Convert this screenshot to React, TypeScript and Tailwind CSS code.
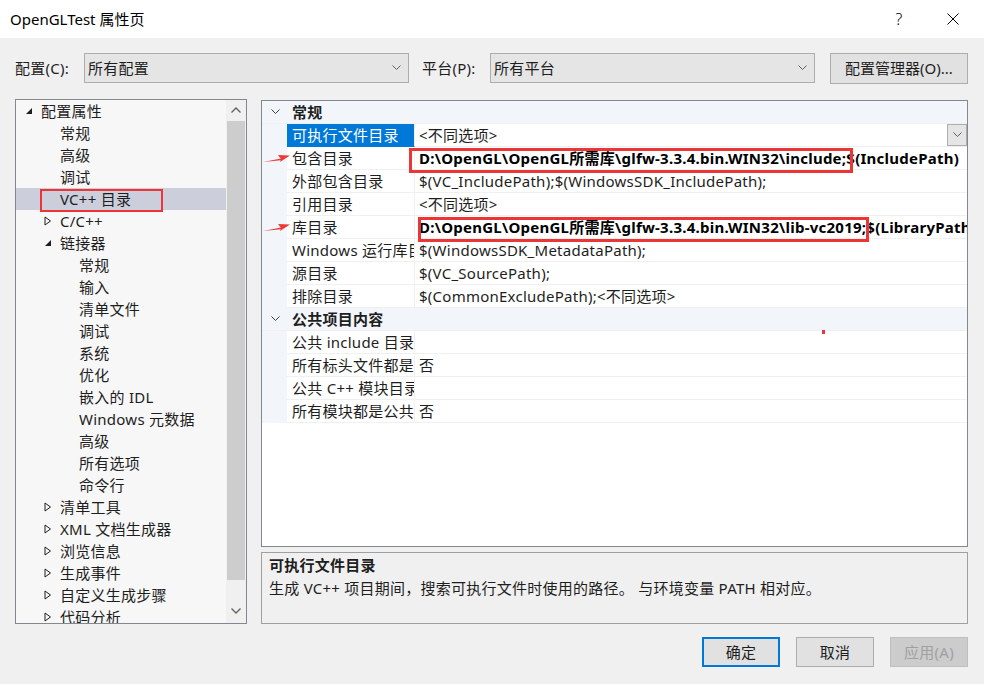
import React from "react";

type TreeItem = { t: string; lvl: number; exp?: "open" | "closed"; sel?: boolean };

const tree: TreeItem[] = [
  { t: "配置属性", lvl: 0, exp: "open" },
  { t: "常规", lvl: 1 },
  { t: "高级", lvl: 1 },
  { t: "调试", lvl: 1 },
  { t: "VC++ 目录", lvl: 1, sel: true },
  { t: "C/C++", lvl: 1, exp: "closed" },
  { t: "链接器", lvl: 1, exp: "open" },
  { t: "常规", lvl: 2 },
  { t: "输入", lvl: 2 },
  { t: "清单文件", lvl: 2 },
  { t: "调试", lvl: 2 },
  { t: "系统", lvl: 2 },
  { t: "优化", lvl: 2 },
  { t: "嵌入的 IDL", lvl: 2 },
  { t: "Windows 元数据", lvl: 2 },
  { t: "高级", lvl: 2 },
  { t: "所有选项", lvl: 2 },
  { t: "命令行", lvl: 2 },
  { t: "清单工具", lvl: 1, exp: "closed" },
  { t: "XML 文档生成器", lvl: 1, exp: "closed" },
  { t: "浏览信息", lvl: 1, exp: "closed" },
  { t: "生成事件", lvl: 1, exp: "closed" },
  { t: "自定义生成步骤", lvl: 1, exp: "closed" },
  { t: "代码分析", lvl: 1, exp: "closed" },
];

const padByLevel = ["pl-[9px]", "pl-[28px]", "pl-[47px]"];

type Row =
  | { kind: "header"; t: string }
  | { kind: "row"; label: string; value: string; bold?: boolean; sel?: boolean; dd?: boolean };

const rows: Row[] = [
  { kind: "header", t: "常规" },
  { kind: "row", label: "可执行文件目录", value: "<不同选项>", sel: true, dd: true },
  { kind: "row", label: "包含目录", value: "D:\\OpenGL\\OpenGL所需库\\glfw-3.3.4.bin.WIN32\\include;$(IncludePath)", bold: true },
  { kind: "row", label: "外部包含目录", value: "$(VC_IncludePath);$(WindowsSDK_IncludePath);" },
  { kind: "row", label: "引用目录", value: "<不同选项>" },
  { kind: "row", label: "库目录", value: "D:\\OpenGL\\OpenGL所需库\\glfw-3.3.4.bin.WIN32\\lib-vc2019;$(LibraryPath)", bold: true },
  { kind: "row", label: "Windows 运行库目录", value: "$(WindowsSDK_MetadataPath);" },
  { kind: "row", label: "源目录", value: "$(VC_SourcePath);" },
  { kind: "row", label: "排除目录", value: "$(CommonExcludePath);<不同选项>" },
  { kind: "header", t: "公共项目内容" },
  { kind: "row", label: "公共 include 目录", value: "" },
  { kind: "row", label: "所有标头文件都是公共的", value: "否" },
  { kind: "row", label: "公共 C++ 模块目录", value: "" },
  { kind: "row", label: "所有模块都是公共的", value: "否" },
];

function ChevronDown({ className = "" }: { className?: string }) {
  return (
    <svg width="9" height="6" viewBox="0 0 9 6" className={className}>
      <path d="M0.5 0.5 L4.5 4.5 L8.5 0.5" fill="none" stroke="currentColor" strokeWidth="1" />
    </svg>
  );
}

function TreeToggle({ exp }: { exp?: "open" | "closed" }) {
  if (exp === "open")
    return (
      <svg width="8" height="8" viewBox="0 0 8 8">
        <polygon points="7,1 7,7 1,7" fill="#1e1e1e" />
      </svg>
    );
  if (exp === "closed")
    return (
      <svg width="8" height="10" viewBox="0 0 8 10">
        <polygon points="1,1 6.5,5 1,9" fill="none" stroke="#1e1e1e" strokeWidth="1" />
      </svg>
    );
  return null;
}

function RedArrow() {
  return (
    <svg width="28" height="10" viewBox="0 0 28 10">
      <path d="M0 8 L18 4.6 L18 6.2 Z" fill="#ec3a3a" />
      <polygon points="27,1.5 15,1 18,5 17,8" fill="#ec3a3a" />
    </svg>
  );
}

export default function App() {
  return (
    <div className="w-[984px] h-[684px] bg-[#f0f0f0] flex flex-col font-['Noto_Sans','Noto_Sans_CJK_SC',sans-serif] text-[15px] tracking-[0.25px] text-[#1e1e1e] overflow-hidden">
      {/* Title bar */}
      <div className="h-[38px] bg-white flex items-center shrink-0">
        <div className="pl-[10px] text-[15px] leading-[20px] text-black tracking-normal">OpenGLTest 属性页</div>
        <div className="ml-auto flex items-center">
          <div className="w-[20px] text-center text-[16px] leading-[20px] text-black font-light mr-[38px]">?</div>
          <svg width="12" height="12" viewBox="0 0 12 12" className="mr-[25px]">
            <path d="M0.5 0.5 L11.5 11.5 M11.5 0.5 L0.5 11.5" stroke="#000" strokeWidth="1" />
          </svg>
        </div>
      </div>

      {/* Config row */}
      <div className="flex items-center h-[30px] mt-[15px] shrink-0">
        <div className="w-[84px] pl-[15px] leading-[20px]">配置(C):</div>
        <div className="w-[325px] h-[30px] bg-[#e5e5e5] border border-[#adadad] flex items-center pl-[3px] pr-[7px]">
          <span className="leading-[20px]">所有配置</span>
          <ChevronDown className="ml-auto text-[#606060]" />
        </div>
        <div className="w-[81px] pl-[13px] leading-[20px]">平台(P):</div>
        <div className="w-[325px] h-[30px] bg-[#e5e5e5] border border-[#adadad] flex items-center pl-[3px] pr-[7px]">
          <span className="leading-[20px]">所有平台</span>
          <ChevronDown className="ml-auto text-[#606060]" />
        </div>
        <div className="ml-[15px] w-[138px] h-[31px] bg-[#e1e1e1] border border-[#adadad] flex items-center justify-center leading-[20px] tracking-normal">
          配置管理器(O)...
        </div>
      </div>

      {/* Main */}
      <div className="flex mt-[16px] h-[525px] shrink-0">
        {/* Tree */}
        <div className="ml-[15px] w-[232px] h-[525px] border border-[#828790] bg-[#f7f7f7] flex overflow-hidden relative">
          <div className="flex-1 overflow-hidden">
            {tree.map((it, i) => (
              <div
                key={i}
                className={`h-[22px] flex items-center whitespace-nowrap ${padByLevel[it.lvl]} ${it.sel ? "bg-[#cccedb]" : ""}`}
              >
                <div className="w-[16px] flex items-center">
                  <TreeToggle exp={it.exp} />
                </div>
                <span className="leading-[20px]">{it.t}</span>
              </div>
            ))}
          </div>
          <div className="w-[20px] bg-[#f0f0f0] flex flex-col items-stretch">
            <div className="h-[20px] flex items-center justify-center text-[#606060]">
              <svg width="10" height="6" viewBox="0 0 10 6">
                <path d="M0.5 5.5 L5 1 L9.5 5.5" fill="none" stroke="currentColor" strokeWidth="1.3" />
              </svg>
            </div>
            <div className="mt-[1px] h-[459px] mx-[1px] bg-[#cdcdcd]" />
            <div className="flex-1" />
            <div className="h-[20px] flex items-center justify-center text-[#606060] mb-[2px]">
              <svg width="10" height="6" viewBox="0 0 10 6">
                <path d="M0.5 0.5 L5 5 L9.5 0.5" fill="none" stroke="currentColor" strokeWidth="1.3" />
              </svg>
            </div>
          </div>
          {/* red box on VC++ 目录 */}
          <div className="absolute left-[24px] top-[89px] w-[123px] h-[23px] border-[2.5px] border-[#ec3535]" />
        </div>

        {/* Right column */}
        <div className="ml-[14px] w-[707px] flex flex-col">
          <div className="h-[447px] mt-[1px] border border-[#828790] bg-white relative overflow-hidden">
            {rows.map((r, i) =>
              r.kind === "header" ? (
                <div key={i} className="h-[23px] bg-[#f2f5fa] flex items-center border-b border-[#f0f0f0]">
                  <div className="w-[25px] flex justify-center pl-[1px] text-[#404040]">
                    <ChevronDown />
                  </div>
                  <span className="pl-[5px] font-bold leading-[20px] whitespace-nowrap">{r.t}</span>
                </div>
              ) : (
                <div key={i} className="h-[23px] flex">
                  <div className="w-[25px] bg-[#f2f5fa] shrink-0" />
                  <div
                    className={`w-[128px] shrink-0 border-r border-[#f0f0f0] border-b overflow-hidden whitespace-nowrap flex items-center pl-[5px] ${
                      r.sel ? "bg-[#0078d7] text-white border-b-[#0078d7]" : "border-b-[#f0f0f0]"
                    }`}
                  >
                    <span className="leading-[20px]">{r.label}</span>
                  </div>
                  <div className="flex-1 border-b border-[#f0f0f0] flex items-center pl-[4px] whitespace-nowrap overflow-hidden">
                    <span className={`leading-[20px] ${r.bold ? "font-bold text-black" : ""}`}>{r.value}</span>
                    {r.dd && (
                      <div className="ml-auto w-[20px] h-[22px] bg-[#e5e5e5] border border-[#adadad] flex items-center justify-center text-[#606060] shrink-0">
                        <ChevronDown />
                      </div>
                    )}
                  </div>
                </div>
              )
            )}
            {/* annotations */}
            <div className="absolute left-[147px] top-[47px] w-[444px] h-[25px] border-[3px] border-[#ec3535]" />
            <div className="absolute left-[156px] top-[116px] w-[451px] h-[25px] border-[3px] border-[#ec3535]" />
            <div className="absolute left-[1px] top-[53px]">
              <RedArrow />
            </div>
            <div className="absolute left-[1px] top-[122px]">
              <RedArrow />
            </div>
            <div className="absolute left-[560px] top-[229px] w-[3px] h-[4px] bg-[#ec3535]" />
          </div>
          <div className="mt-[5px] flex-1 border border-[#a0a0a0] bg-[#f0f0f0] px-[7px]">
            <div className="font-bold leading-[22px] h-[23px] flex items-center">可执行文件目录</div>
            <div className="leading-[22px] h-[24px] flex items-center">
              生成 VC++ 项目期间，搜索可执行文件时使用的路径。 与环境变量 PATH 相对应。
            </div>
          </div>
        </div>
      </div>

      {/* Buttons */}
      <div className="flex justify-end mt-[13px] pr-[16px] gap-[16px] shrink-0">
        <div className="w-[78px] h-[30px] bg-[#e1e1e1] border-2 border-[#0078d7] flex items-center justify-center leading-[20px]">
          确定
        </div>
        <div className="w-[78px] h-[30px] bg-[#e1e1e1] border border-[#adadad] flex items-center justify-center leading-[20px]">
          取消
        </div>
        <div className="w-[78px] h-[30px] bg-[#cccccc] border border-[#bfbfbf] flex items-center justify-center leading-[20px] text-[#a0a0a0]">
          应用(A)
        </div>
      </div>
    </div>
  );
}
